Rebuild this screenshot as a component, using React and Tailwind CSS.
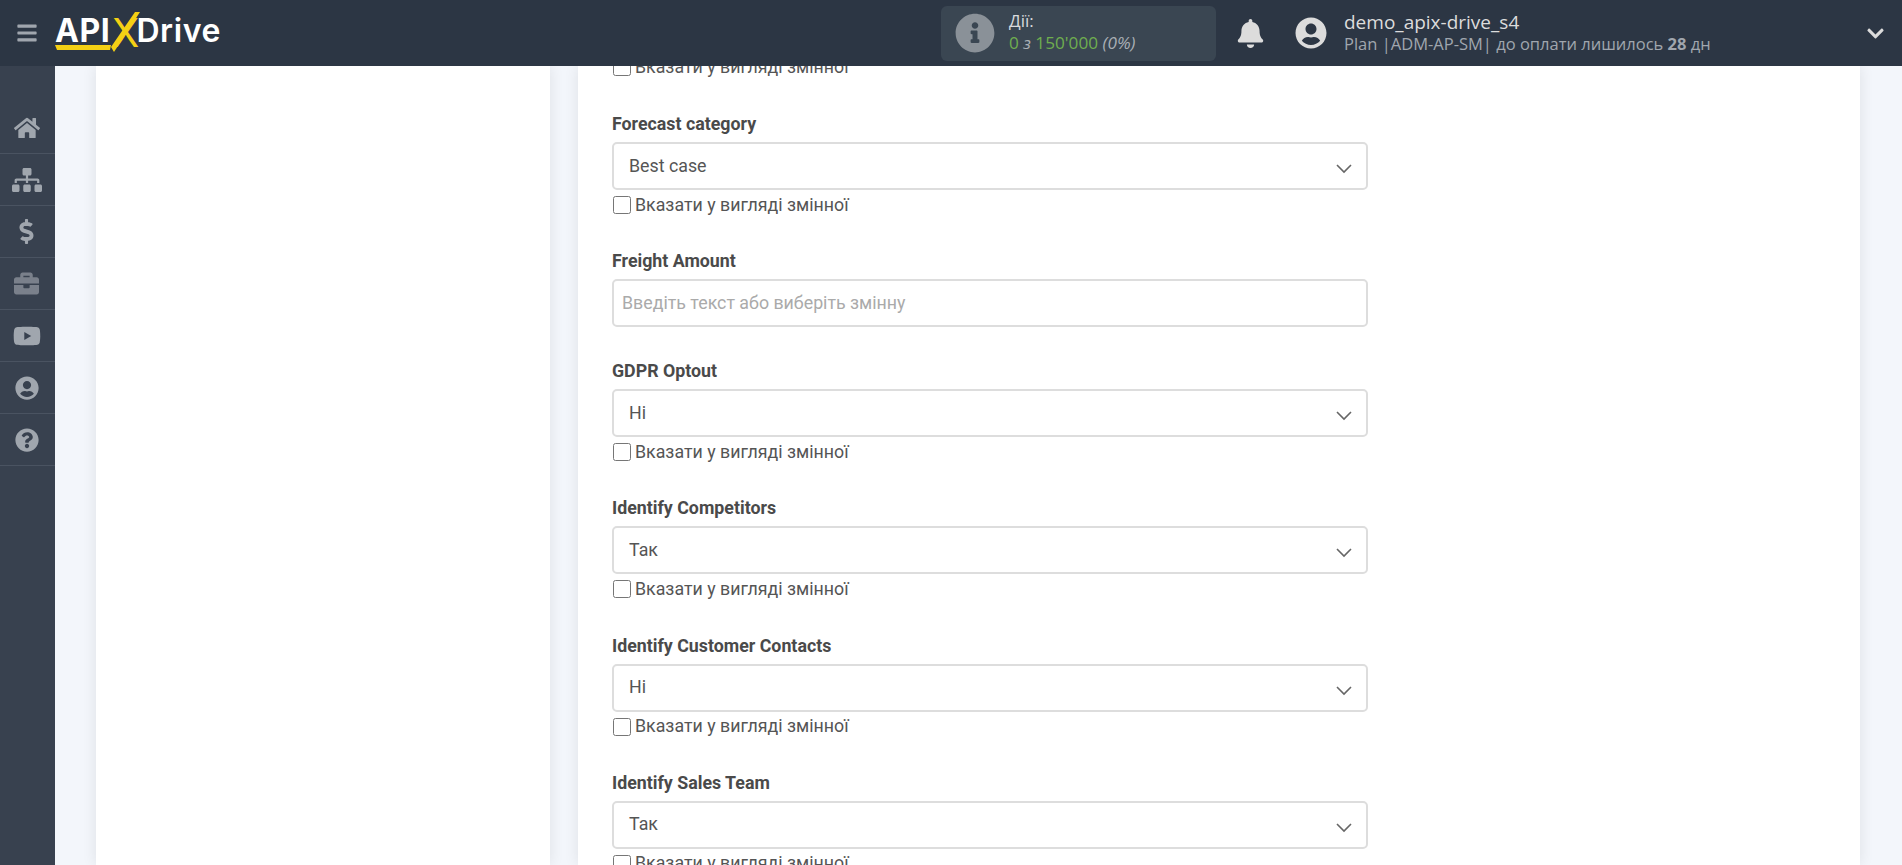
import React from 'react';
import {
  FaBars,
  FaBell,
  FaBriefcase,
  FaChevronDown,
  FaDollarSign,
  FaHome,
  FaInfoCircle,
  FaQuestionCircle,
  FaSitemap,
  FaUserCircle,
  FaYoutube,
} from 'react-icons/fa';

const navItems = [
  { icon: FaHome, size: 'text-[26px]', color: 'text-[#a0a6ae]' },
  { icon: FaSitemap, size: 'text-[30px]', color: 'text-[#a0a6ae]' },
  { icon: FaDollarSign, size: 'text-[25px]', color: 'text-[#a0a6ae]' },
  { icon: FaBriefcase, size: 'text-[25px]', color: 'text-[#7a808b]' },
  { icon: FaYoutube, size: 'text-[28px]', color: 'text-[#a0a6ae]' },
  { icon: FaUserCircle, size: 'text-[24px]', color: 'text-[#a0a6ae]' },
  { icon: FaQuestionCircle, size: 'text-[24px]', color: 'text-[#a0a6ae]' },
];

const Logo = () => (
  <div className="relative ml-[17px] flex h-[50px] w-[170px] items-center font-['Inter',sans-serif] text-[32px] font-bold leading-none text-white">
    <span className="mb-[4px] tracking-[0.5px]">API</span>
    <span className="ml-[2px] text-[40px] font-normal text-[#f4d014]">X</span>
    <span className="-ml-[3px] mb-[4px] font-semibold tracking-[0.6px]">Drive</span>
    <svg className="absolute left-0 top-0" width="170" height="50" viewBox="0 0 170 50">
      <polygon points="0,37 56,37 55,42 2,42" fill="#f4d014" />
      <polygon points="56,39 80,4 85,4 59,44" fill="#f4d014" />
    </svg>
  </div>
);

const Header = () => (
  <header className="relative z-10 flex h-[66px] shrink-0 items-center bg-[#2c3644] font-['Open_Sans',sans-serif]">
    <FaBars className="ml-[16px] text-[22px] text-[#a0a6ae]" />
    <Logo />
    <div className="ml-[716px] flex h-[55px] w-[275px] items-center rounded-[6px] bg-[#3a4652]">
      <FaInfoCircle className="ml-[14px] text-[40px] text-[#8a9198]" />
      <div className="ml-[14px] pb-[3px] leading-[22px]">
        <div className="text-[17px] text-[#d8dadd]">Дії:</div>
        <div className="text-[17.2px] text-[#6fae4f]">
          0 <span className="italic text-[#a9afb5]">з</span> 150'000{' '}
          <span className="italic text-[#a9afb5]">(0%)</span>
        </div>
      </div>
    </div>
    <FaBell className="ml-[20px] text-[29px] text-[#dcdcdc]" />
    <FaUserCircle className="ml-[30px] text-[32px] text-[#dcdcdc]" />
    <div className="ml-[17px] leading-[22px]">
      <div className="text-[19px] text-[#dcdcdc]">demo_apix-drive_s4</div>
      <div className="text-[16.5px] text-[#a0a6ae]">
        Plan |ADM-AP-SM| до оплати лишилось <b className="font-bold">28</b> дн
      </div>
    </div>
    <FaChevronDown className="ml-auto mr-[17px] text-[19px] text-[#dcdcdc]" />
  </header>
);

const Sidebar = () => (
  <aside className="w-[55px] shrink-0 bg-[#38414f] pt-[36px]">
    {navItems.map(({ icon: Icon, size, color }, i) => (
      <div
        key={i}
        className="flex h-[52px] items-center justify-center border-b border-[#4a5361] pr-[2px]"
      >
        <Icon className={`${size} ${color}`} />
      </div>
    ))}
  </aside>
);

const VariableCheckbox = () => (
  <label className="flex h-[30px] items-center text-[17.8px] text-[#555]">
    <input type="checkbox" className="m-0 ml-[1px] h-[18px] w-[18px]" />
    <span className="ml-[4px]">Вказати у вигляді змінної</span>
  </label>
);

const Chevron = () => (
  <svg className="absolute right-[14px] top-[20px]" width="16" height="10" viewBox="0 0 16 10" fill="none">
    <path d="M1 1l7 7 7-7" stroke="#666" strokeWidth="1.6" />
  </svg>
);

const SelectField = ({ label, value }) => (
  <div className="mb-[29.2px]">
    <div className="mb-[7px] pt-[1px] text-[17.8px] font-bold leading-[22px] text-[#4a4a4a]">{label}</div>
    <div className="relative flex h-[48px] items-center rounded-[5px] border-2 border-[#ddd] pl-[15px] text-[17.8px] text-[#555]">
      {value}
      <Chevron />
    </div>
    <VariableCheckbox />
  </div>
);

const TextField = ({ label, placeholder }) => (
  <div className="mb-[32px]">
    <div className="mb-[7px] pt-[1px] text-[17.8px] font-bold leading-[22px] text-[#4a4a4a]">{label}</div>
    <input
      placeholder={placeholder}
      className="h-[48px] w-full rounded-[5px] border-2 border-[#ddd] pb-[2px] pl-[8px] text-[17.8px] outline-none placeholder:text-[#aaa]"
    />
  </div>
);

export default function App() {
  return (
    <div className="flex h-screen flex-col overflow-hidden bg-[#f3f6fb] font-['Roboto',sans-serif]">
      <Header />
      <div className="flex min-h-0 flex-1">
        <Sidebar />
        <main className="flex min-w-0 flex-1 overflow-hidden pl-[41px] pr-[42px]">
          <div className="w-[454px] shrink-0 bg-white shadow-[0_0_14px_rgba(0,0,0,0.09)]" />
          <div className="ml-[28px] flex-1 bg-white pl-[34px] shadow-[0_0_14px_rgba(0,0,0,0.09)]">
            <div className="-mt-[14px] w-[756px]">
              <div className="mb-[30px]">
                <VariableCheckbox />
              </div>
              <SelectField label="Forecast category" value="Best case" />
              <TextField label="Freight Amount" placeholder="Введіть текст або виберіть змінну" />
              <SelectField label="GDPR Optout" value="Ні" />
              <SelectField label="Identify Competitors" value="Так" />
              <SelectField label="Identify Customer Contacts" value="Ні" />
              <SelectField label="Identify Sales Team" value="Так" />
            </div>
          </div>
        </main>
      </div>
    </div>
  );
}
